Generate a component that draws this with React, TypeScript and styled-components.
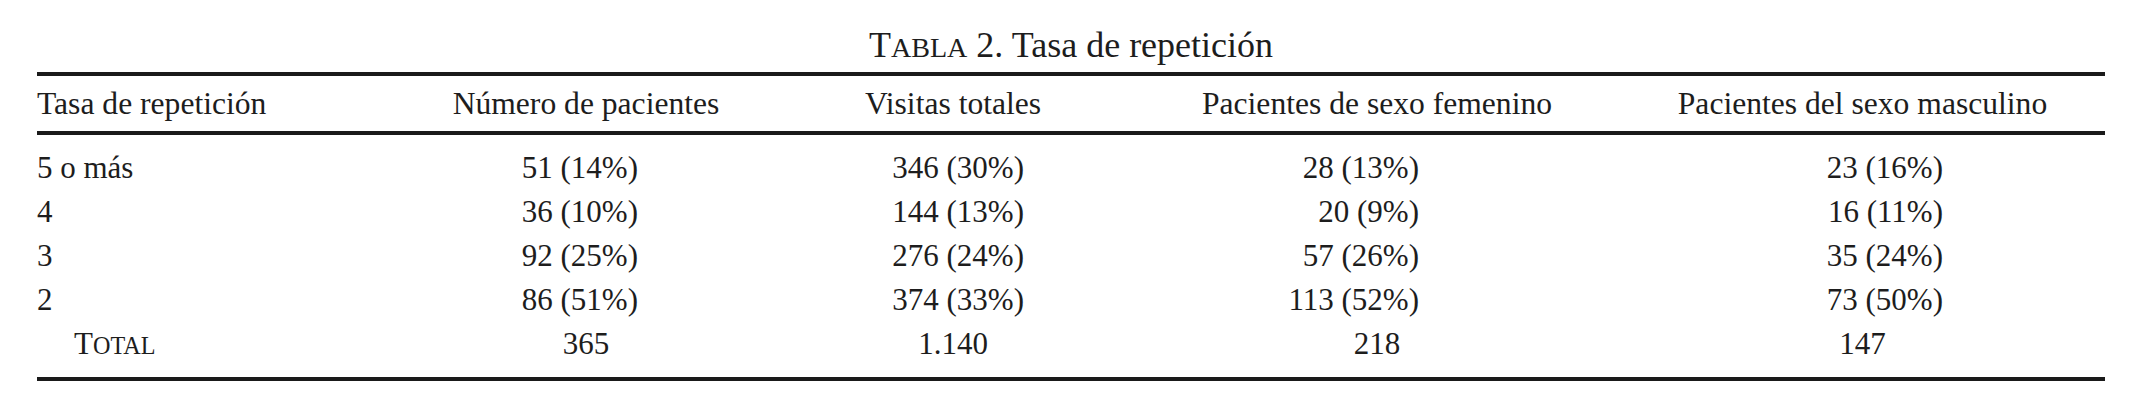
import styled, { createGlobalStyle } from 'styled-components';

const GlobalStyle = createGlobalStyle`
  html, body {
    margin: 0;
    padding: 0;
    background: #ffffff;
  }
  body {
    font-family: "Liberation Serif", "Times New Roman", serif;
    color: #1d1d1d;
  }
`;

// column widths picked so header centres land where the print has them
const COLS = '363px 372px 362px 486px 485px';
// right inset of the "n (x%)" figures inside each numeric column
const PCT_INSET = [134, 110, 201, 162];

const Page = styled.div`
  padding: 25px 28px 0 37px;
  width: 2068px;
`;

const Caption = styled.div`
  font-size: 36px;
  line-height: 40px;
  text-align: center;
  margin-bottom: 7px;
`;

// hand-made small caps: the print's are taller than the browser's synthetic ones
const SmallCaps = styled.span`
  font-size: 0.78em;
  line-height: 1;
  text-transform: uppercase;
`;

const Table = styled.div`
  border-top: 4px solid #1a1a1a;
  border-bottom: 4px solid #1a1a1a;
`;

const HeadRow = styled.div`
  display: grid;
  grid-template-columns: ${COLS};
  padding: 6px 0 5px;
  border-bottom: 4px solid #1a1a1a;
`;

const Body = styled.div`
  padding: 11px 0 11px;
`;

const Row = styled.div`
  display: grid;
  grid-template-columns: ${COLS};
`;

const Cell = styled.div<{
  $align?: 'left' | 'center' | 'right';
  $inset?: number;
  $indent?: number;
  $head?: boolean;
}>`
  font-size: ${({ $head }) => ($head ? 31.6 : 31)}px;
  line-height: 44px;
  white-space: nowrap;
  text-align: ${({ $align }) => $align ?? 'center'};
  padding-right: ${({ $inset }) => $inset ?? 0}px;
  padding-left: ${({ $indent }) => $indent ?? 0}px;
`;

const headers = [
  'Tasa de repetición',
  'Número de pacientes',
  'Visitas totales',
  'Pacientes de sexo femenino',
  'Pacientes del sexo masculino',
];

const rows = [
  ['5 o más', '51 (14%)', '346 (30%)', '28 (13%)', '23 (16%)'],
  ['4', '36 (10%)', '144 (13%)', '20 (9%)', '16 (11%)'],
  ['3', '92 (25%)', '276 (24%)', '57 (26%)', '35 (24%)'],
  ['2', '86 (51%)', '374 (33%)', '113 (52%)', '73 (50%)'],
];

const totals = ['365', '1.140', '218', '147'];

export default function App() {
  return (
    <>
      <GlobalStyle />
      <Page>
        <Caption>
          T<SmallCaps>abla</SmallCaps> 2. Tasa de repetición
        </Caption>
        <Table>
          <HeadRow>
            {headers.map((h, i) => (
              <Cell key={h} $head $align={i === 0 ? 'left' : 'center'}>
                {h}
              </Cell>
            ))}
          </HeadRow>
          <Body>
            {rows.map((r) => (
              <Row key={r[0]}>
                <Cell $align="left">{r[0]}</Cell>
                {r.slice(1).map((v, i) => (
                  <Cell key={i} $align="right" $inset={PCT_INSET[i]}>
                    {v}
                  </Cell>
                ))}
              </Row>
            ))}
            <Row>
              <Cell $align="left" $indent={37}>
                T<SmallCaps>otal</SmallCaps>
              </Cell>
              {totals.map((t) => (
                <Cell key={t}>{t}</Cell>
              ))}
            </Row>
          </Body>
        </Table>
      </Page>
    </>
  );
}
